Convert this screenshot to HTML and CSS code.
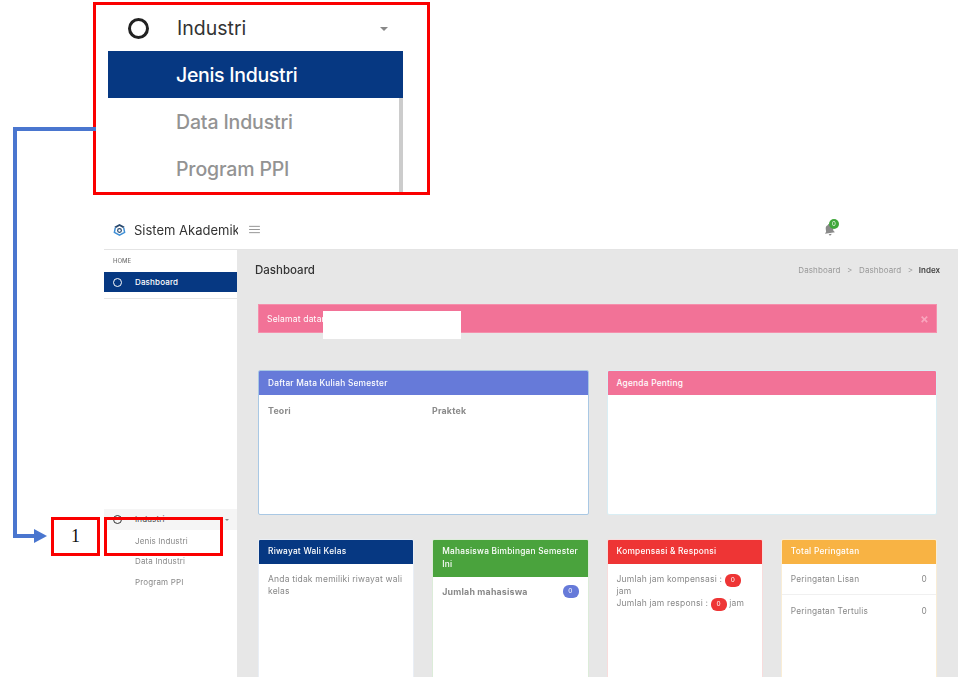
FILE: index.html
```html
<!DOCTYPE html>
<html lang="id">
<head>
<meta charset="utf-8">
<title>Sistem Akademik</title>
<link rel="stylesheet" href="styles.css">
</head>
<body>
<div class="page">
  <div class="app">
    <header class="topbar">
      <div class="brand">
        <svg class="logo" viewBox="0 0 14 14" aria-hidden="true">
          <path d="M2.500 5 1.500 10 7 13 12.500 10 11.500 5" fill="none" stroke="#3f8fd6" stroke-width="1.600"/>
          <path d="M7 1 12.500 4 10.800 5.500 7 3.200 3.200 5.500 1.500 4Z" fill="#27486e"/>
          <circle cx="7" cy="8" r="2" fill="none" stroke="#27486e" stroke-width="1.300"/>
        </svg>
        <span class="brand-name">Sistem Akademik</span>
      </div>
      <svg class="burger" viewBox="0 0 12 10" aria-hidden="true">
        <path d="M0 1.500h12M0 5h12M0 8.500h12" stroke="#8b8b8b" stroke-width="1"/>
      </svg>
      <div class="bell">
        <svg viewBox="0 0 12 14" aria-hidden="true">
          <path d="M6 1a1 1 0 0 1 1 1c2 .5 3 2 3 4v3l1.500 1.800H.5L2 9V6c0-2 1-3.500 3-4a1 1 0 0 1 1-1ZM4.500 12h3a1.500 1.500 0 0 1-3 0Z" fill="#8a8a8a"/>
        </svg>
        <span class="bell-count">0</span>
      </div>
    </header>
    <div class="body">
      <aside class="sidebar">
        <div class="side-top">
          <div class="side-label">HOME</div>
          <a class="side-item active"><i class="ring"></i>Dashboard</a>
          <div class="side-rule"></div>
        </div>
        <div class="side-group">
          <a class="side-item open"><i class="ring dark"></i>Industri<b class="caret"></b></a>
          <a class="side-sub">Jenis Industri</a>
          <a class="side-sub">Data Industri</a>
          <a class="side-sub">Program PPI</a>
        </div>
      </aside>
      <main class="content">
        <div class="page-head">
          <h1>Dashboard</h1>
          <nav class="crumbs">
            <span>Dashboard</span><em>&gt;</em><span>Dashboard</span><em>&gt;</em><strong>Index</strong>
          </nav>
        </div>
        <div class="alert"><span>Selamat datang</span><span class="close">×</span></div>
        <div class="row two">
          <section class="card blue"><h2>Daftar Mata Kuliah Semester</h2>
            <div class="card-body split"><b>Teori</b><b>Praktek</b></div></section>
          <section class="card pink"><h2>Agenda Penting</h2><div class="card-body"></div></section>
        </div>
        <div class="row four">
          <section class="card navy"><h2>Riwayat Wali Kelas</h2>
            <div class="card-body"><p>Anda tidak memiliki riwayat wali kelas</p></div></section>
          <section class="card green"><h2>Mahasiswa Bimbingan Semester Ini</h2>
            <div class="card-body"><div class="between"><b>Jumlah mahasiswa</b><span class="pill indigo">0</span></div></div></section>
          <section class="card red"><h2>Kompensasi &amp; Responsi</h2>
            <div class="card-body"><p>Jumlah jam kompensasi : <span class="pill crimson">0</span> jam<br>Jumlah jam responsi : <span class="pill crimson">0</span> jam</p></div></section>
          <section class="card amber"><h2>Total Peringatan</h2>
            <div class="list"><div class="between li"><span>Peringatan Lisan</span><span>0</span></div><div class="between li"><span>Peringatan Tertulis</span><span>0</span></div></div></section>
        </div>
      </main>
    </div>
  </div>

  <div class="callout">
    <div class="call-head"><i class="call-ring"></i><span>Industri</span><b class="call-caret"></b></div>
    <div class="call-list">
      <div class="call-item on">Jenis Industri</div>
      <div class="call-item">Data Industri</div>
      <div class="call-item">Program PPI</div>
    </div>
  </div>
  <div class="redact"></div>
  <div class="mark num">1</div>
  <div class="mark focus"></div>
  <svg class="connector" viewBox="0 0 100 420" aria-hidden="true">
    <path d="M85 2H4V409H24" fill="none" stroke="#4a76cf" stroke-width="4"/>
    <path d="M23 402 36 409 23 416Z" fill="#4a76cf"/>
  </svg>
</div>
</body>
</html>
```
FILE: styles.css
```css
* { box-sizing: border-box; }
html, body { margin: 0; background: #fff; }
body { font-family: Inter, "Open Sans", sans-serif; color: #333; }
.page { position: relative; width: 971px; height: 687px; overflow: hidden; filter: blur(.35px); }
.app { margin: 209px 13px 0 104px; height: 468px; display: flex; flex-direction: column; }

.topbar { height: 41px; display: flex; align-items: center; border-bottom: 1px solid #e4e4e4; padding: 1px 0 0 9px; }
.brand { width: 125px; display: flex; align-items: center; gap: 8px; overflow: hidden; flex: none; }
.logo { width: 13px; height: 13px; flex: none; }
.brand-name { font-size: 13px; white-space: nowrap; color: #333; }
.burger { width: 11px; height: 9px; flex: none; margin-left: 11px; }
.bell { position: relative; margin-left: 564px; width: 11px; height: 13px; }
.bell svg { display: block; width: 11px; height: 13px; transform: rotate(-8deg); }
.bell-count { position: absolute; left: 5px; top: -4px; width: 10px; height: 10px; border-radius: 50%; background: #3fa73a; color: #fff; font-size: 6px; line-height: 10px; text-align: center; }

.body { flex: 1; display: flex; min-height: 0; }
.sidebar { width: 133px; flex: none; display: flex; flex-direction: column; justify-content: space-between; }
.side-label { font-size: 6px; font-weight: 500; color: #777; padding: 7px 0 0 9px; height: 22px; }
.side-item { display: flex; align-items: center; height: 20px; font-size: 8px; letter-spacing: .15px; padding-left: 9px; gap: 13px; position: relative; }
.side-item.active { background: #063882; color: #fff; font-weight: 500; }
.side-item.open { background: #f5f5f5; height: 21px; color: #444; }
.ring { width: 9px; height: 9px; border: 1.500px solid #fff; border-radius: 50%; flex: none; }
.ring.dark { border-color: #333; }
.caret { position: absolute; right: 8px; top: 10px; border: 2px solid transparent; border-top-color: #888; border-bottom: 0; }
.side-rule { height: 1px; background: #e6e6e6; margin-top: 6px; }
.side-group { padding-bottom: 86px; }
.side-sub { display: block; height: 20.500px; line-height: 22px; font-size: 8px; letter-spacing: .15px; color: #888; padding-left: 31px; }

.content { flex: 1; background: #e7e7e7; padding: 0 21px; overflow: hidden; }
.page-head { display: flex; justify-content: space-between; align-items: center; height: 41px; margin: 0 -3px; padding-bottom: 1px; }
h1 { margin: 0; font-size: 11.500px; font-weight: 500; color: #333; }
.crumbs { display: flex; gap: 6.500px; font-size: 8px; letter-spacing: .12px; color: #999; }
.crumbs strong { color: #444; font-weight: 600; margin-left: -1px; letter-spacing: 0; }
.crumbs em { font-style: normal; }

.alert { margin-top: 13px; height: 29px; background: #f27297; border: 1px solid #f58fac; color: #fff; font-size: 8.500px; letter-spacing: .2px; display: flex; justify-content: space-between; align-items: center; padding: 0 7px 0 8px; }
.close { color: #f9a5bd; font-size: 13px; font-weight: 700; }

.row { display: grid; gap: 18px; }
.two { grid-template-columns: 1fr 1fr; margin-top: 37px; height: 145px; }
.four { grid-template-columns: repeat(4, 1fr); margin-top: 24px; height: 145px; }
.card { background: #fff; border: 1px solid; border-radius: 2px; display: flex; flex-direction: column; overflow: hidden; }
.card h2 { margin: -1px -1px 0; padding: 6.250px 6px 6.250px 10px; font-size: 8.300px; letter-spacing: .25px; line-height: 12.500px; font-weight: 500; color: #fff; }
.two .card h2 { padding-top: 7px; padding-bottom: 5.500px; }
.card-body { padding: 10px 9px; font-size: 8.500px; letter-spacing: .2px; color: #888; flex: 1; }
.card-body p { margin: 0; line-height: 12px; }
.four .card-body { padding: 9px; }
.card-body b { font-weight: 700; color: #8a8a8a; font-size: 8.800px; }
.split { display: grid; grid-template-columns: 164px 1fr; align-content: start; }
.blue { border-color: #a9c8e4; } .blue h2 { background: #667ad9; }
.pink { border-color: #d9eef4; } .pink h2 { background: #f27297; }
.navy { border-color: #e9eef5; } .navy h2 { background: #063882; }
.green { border-color: #dcecd9; } .green h2 { background: #4aa33d; }
.red { border-color: #f8dcdc; } .red h2 { background: #ee3535; }
.amber { border-color: #f9edd6; } .amber h2 { background: #f8b344; }
.between { display: flex; justify-content: space-between; align-items: center; }
.pill { display: inline-block; min-width: 16px; height: 13px; line-height: 13px; margin: -2px 0; border-radius: 6px; text-align: center; font-size: 6.500px; color: #fff; }
.indigo { background: #667ad9; }
.crimson { background: #ee3535; }
.list { font-size: 8.300px; letter-spacing: .2px; color: #888; }
.li { height: 31px; padding: 0 9px; border-bottom: 1px solid #f0f0f0; }
.li:last-child { border-bottom: 0; }

.callout { position: absolute; left: 93px; top: 2px; width: 337px; height: 193px; border: 3px solid #fa0000; background: #fff; padding: 0 24px 0 12px; }
.call-head { height: 46px; position: relative; display: flex; align-items: center; padding-left: 20px; font-size: 19.500px; color: #333; }
.call-ring { width: 21px; height: 21px; border: 3.500px solid #222; border-radius: 50%; margin-right: 28px; flex: none; }
.call-caret { position: absolute; right: 15px; top: 22px; border: 4px solid transparent; border-top-color: #888; border-bottom: 0; }
.call-list { border-right: 4px solid #ccc; height: 141px; }
.call-item { height: 47px; line-height: 49px; padding-left: 68px; font-size: 19.500px; letter-spacing: -.15px; color: #939393; font-weight: 500; }
.call-item.on { background: #063882; color: #fff; margin-right: -4px; letter-spacing: -.3px; }

.redact { position: absolute; left: 323px; top: 311px; width: 138px; height: 28px; background: #fff; }
.mark { position: absolute; top: 517px; height: 39px; border: 3px solid #fa0000; }
.num { left: 51px; width: 49px; font: 18px/33px "Liberation Serif", serif; text-align: center; color: #111; background: #fff; }
.focus { left: 104px; width: 119px; }
.connector { position: absolute; left: 11px; top: 127px; width: 100px; height: 420px; }
```
